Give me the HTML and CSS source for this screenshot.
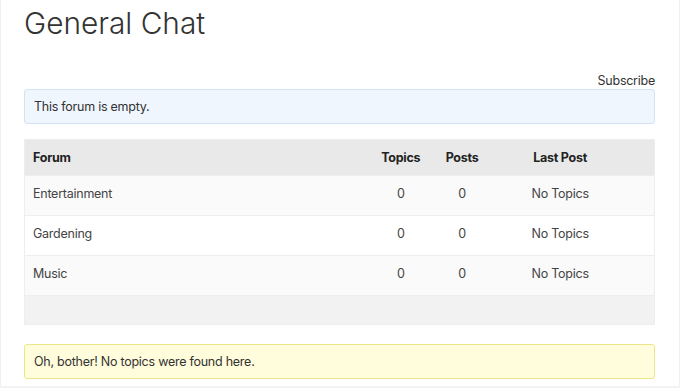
FILE: index.html
```html
<!DOCTYPE html>
<html lang="en">
<head>
    <meta charset="UTF-8" />
    <meta name="viewport" content="width=device-width, initial-scale=1.0"/>
    <title>General Chat</title>
    <link rel="stylesheet" href="styles.css">
</head>
<body>
    <div class="page">
        <h1 class="forum-title">General Chat</h1>

        <div class="forum-actions">
            <a class="subscribe-link" href="#">Subscribe</a>
        </div>

        <div class="notice notice-info">This forum is empty.</div>

        <div class="forums-table">
            <div class="forums-row forums-header">
                <div class="col-forum">Forum</div>
                <div class="col-count">Topics</div>
                <div class="col-count">Posts</div>
                <div class="col-fresh">Last Post</div>
            </div>
            <div class="forums-row odd">
                <div class="col-forum">Entertainment</div>
                <div class="col-count">0</div>
                <div class="col-count">0</div>
                <div class="col-fresh">No Topics</div>
            </div>
            <div class="forums-row even">
                <div class="col-forum">Gardening</div>
                <div class="col-count">0</div>
                <div class="col-count">0</div>
                <div class="col-fresh">No Topics</div>
            </div>
            <div class="forums-row odd">
                <div class="col-forum">Music</div>
                <div class="col-count">0</div>
                <div class="col-count">0</div>
                <div class="col-fresh">No Topics</div>
            </div>
            <div class="forums-footer"></div>
        </div>

        <div class="notice notice-warn">Oh, bother! No topics were found here.</div>
    </div>
</body>
</html>
```

FILE: styles.css
```css
* {
    margin: 0;
    padding: 0;
    box-sizing: border-box;
}

body {
    font-family: 'Inter', 'Liberation Sans', sans-serif;
    font-size: 12.5px;
    letter-spacing: -0.25px;
    color: #333;
    background: #fff;
}

.page {
    width: 680px;
    height: 388px;
    padding: 0 24px 0 23px;
    border-left: 1px solid #f0f0f0;
    border-right: 1px solid #f0f0f0;
    border-bottom: 2px solid #f3f3f3;
    overflow: hidden;
}

.forum-title {
    font-size: 29.8px;
    font-weight: 300;
    letter-spacing: 0;
    color: #333;
    line-height: 46px;
}

.forum-actions {
    text-align: right;
    margin-top: 26px;
    line-height: 17px;
}

.subscribe-link {
    color: #333;
    text-decoration: none;
}

.notice {
    border: 1px solid;
    border-radius: 3px;
    padding: 0 9px;
    height: 35px;
    line-height: 33px;
}

.notice-info {
    background: #f0f6fe;
    border-color: #d3e2f5;
    color: #333;
}

.notice-warn {
    background: #fffddb;
    border-color: #eee58a;
    color: #333;
    margin-top: 19px;
}

.forums-table {
    margin-top: 15px;
    border: 1px solid #eee;
}

.forums-row {
    display: grid;
    grid-template-columns: 55% 10% 10% 22%;
    align-items: center;
    padding: 0 8px 4px;
    height: 40px;
    border-top: 1px solid #eee;
    color: #444;
}

.forums-header {
    background: #e9e9e9;
    border-top: 0;
    height: 35px;
    padding-bottom: 0;
    font-weight: 700;
    color: #222;
}

.odd {
    background: #fafafa;
}

.even {
    background: #fff;
}

.col-count,
.col-fresh {
    text-align: center;
}

.forums-footer {
    height: 29px;
    background: #f2f2f2;
    border-top: 1px solid #eee;
}
```
